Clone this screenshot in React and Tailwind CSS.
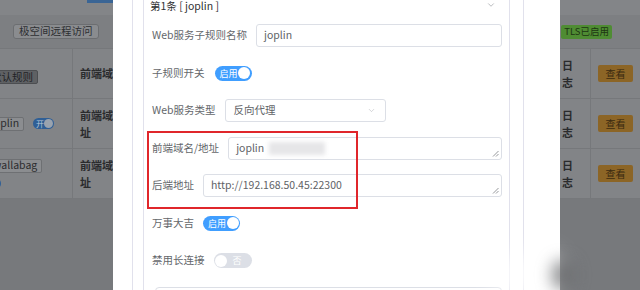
import { ChevronDown } from "lucide-react";

const Switch = ({ on, text }) =>
  on ? (
    <div className="flex h-[15px] w-[37px] items-center justify-between rounded-full bg-[#409eff] pl-[5px] pr-[1.5px]">
      <span className="text-[9px] leading-none text-white">{text}</span>
      <span className="h-[12px] w-[12px] rounded-full bg-white" />
    </div>
  ) : (
    <div className="flex h-[15px] w-[38px] items-center justify-between rounded-full bg-[#dcdfe6] pl-[1.5px] pr-[10px]">
      <span className="h-[12px] w-[12px] rounded-full bg-white" />
      <span className="text-[9px] leading-none text-white">{text}</span>
    </div>
  );

const ResizeHandle = () => (
  <svg className="absolute bottom-[2px] right-[2px]" width="7" height="7" viewBox="0 0 7 7">
    <path d="M1 6.5L6.5 1M4 6.5L6.5 4" stroke="#8a8c90" strokeWidth="0.9" fill="none" />
  </svg>
);

const Row = ({ label, children }) => (
  <div className="flex h-[23px] items-center">
    <span className="mr-[9px] whitespace-nowrap text-[#64676b]">{label}</span>
    {children}
  </div>
);

const TableRow = ({ first, lines }) => (
  <div className="grid h-[50px] grid-cols-[73px_1fr_30px_50px] border-b border-[#76787b] bg-[#828487]">
    <div className="flex items-center overflow-hidden border-r border-[#76787b]">
      <div className="-ml-[14px]">{first}</div>
    </div>
    <div className="flex flex-col justify-center pl-[7px] text-[11px] font-semibold leading-[17px] text-[#2a2b2d]">
      {lines.map((l) => (
        <div key={l} className="whitespace-nowrap">{l}</div>
      ))}
    </div>
    <div className="flex flex-col justify-center pl-[2px] text-[11px] font-semibold leading-[17px] text-[#2a2b2d]">
      <div>日</div>
      <div>志</div>
    </div>
    <div className="flex items-center border-l border-[#76787b] pl-[7px]">
      <span className="flex h-[17px] w-[35px] items-center justify-center rounded-[2px] bg-[#8c6526] text-[10px] text-[#3a2a10]">
        查看
      </span>
    </div>
  </div>
);

const BgTag = ({ children, dark }) => (
  <span
    className={`inline-flex h-[14px] items-center rounded-[2px] border px-[4px] text-[10.5px] leading-none ${
      dark ? "border-[#4c4e51] bg-[#5f6164] text-[#222326]" : "border-[#6e7073] bg-[#8b8d90] text-[#2b2c2e]"
    }`}
  >
    {children}
  </span>
);

export default function App() {
  return (
    <div className="relative h-[290px] w-[640px] overflow-hidden bg-[#77797c] font-['Noto_Sans_CJK_SC',sans-serif]">
      {/* 背景页面 */}
      <div className="h-[15px] bg-[#838588]">
        <div className="ml-[87px] h-[3px] w-[26px] bg-[#3a6595]" />
      </div>
      <div className="flex h-[33px] items-center justify-between bg-[#7d7f82] pl-[13px] pr-[28px]">
        <span className="inline-flex h-[15px] items-center rounded-[3px] border border-[#6c6e71] bg-[#8a8c8f] px-[5px] text-[10.5px] leading-none text-[#2e3033]">
          极空间远程访问
        </span>
        <span className="inline-flex h-[14px] items-center rounded-[2px] bg-[#4f8c33] px-[3px] text-[9.5px] leading-none text-[#1d3512]">
          TLS已启用
        </span>
      </div>
      <div className="border-t border-[#76787b]">
        <TableRow first={<BgTag dark>默认规则</BgTag>} lines={["前端域名地"]} />
        <TableRow
          first={
            <div className="flex items-center gap-[9px]">
              <BgTag>joplin</BgTag>
              <div className="flex h-[11px] w-[21px] items-center justify-between rounded-full bg-[#2f5f96] pl-[3px] pr-[1px]">
                <span className="text-[8px] leading-none text-[#b9c7d8]">开</span>
                <span className="h-[9px] w-[9px] rounded-full bg-[#9aa3ae]" />
              </div>
            </div>
          }
          lines={["前端域名地", "址"]}
        />
        <TableRow
          first={
            <div className="flex flex-col items-start gap-[5px] pl-[2px]">
              <BgTag>wallabag</BgTag>
              <div className="-ml-[8px] flex h-[11px] w-[21px] items-center justify-end rounded-full border-[2px] border-[#2f5f96] bg-[#7f8a98]">
                <span className="h-[7px] w-[7px] rounded-full bg-[#9aa3ae]" />
              </div>
            </div>
          }
          lines={["前端域名地", "址"]}
        />
      </div>

      {/* 遮罩上的对话框 */}
      <div className="absolute left-[113px] top-0 h-[290px] w-[447px] bg-white text-[10.5px] leading-none">
        <div className="-mt-[10px] ml-[19px] h-[310px] w-[392px] border-x border-[#e1e1ec] pl-[10px] pr-[13px]">
          <div className="h-full border-x border-[#e1e1ec]">
            <div className="flex h-[33px] items-center justify-between pl-[6px] pr-[13px] text-[#303133]">
              <span>第1条 [ joplin ]</span>
              <ChevronDown size={10} strokeWidth={1.5} color="#909399" className="-mt-[3px]" />
            </div>
            <div className="flex flex-col gap-[14.5px] pl-[8px] pr-[7px] pt-[1px]">
              <Row label="Web服务子规则名称">
                <div className="flex h-full flex-1 items-center rounded-[3px] border border-[#dcdfe6] px-[7px] text-[#606266]">
                  joplin
                </div>
              </Row>
              <Row label="子规则开关">
                <div className="ml-[1px]">
                  <Switch on text="启用" />
                </div>
              </Row>
              <Row label="Web服务类型">
                <div className="flex h-full w-[161px] items-center justify-between rounded-[3px] border border-[#dcdfe6] pl-[8px] pr-[9px] text-[#606266]">
                  <span>反向代理</span>
                  <ChevronDown size={9} strokeWidth={1.4} color="#b0b3b8" />
                </div>
              </Row>
              <Row label="前端域名/地址">
                <div className="relative flex h-full flex-1 items-center rounded-[3px] border border-[#dcdfe6] px-[7px] text-[#606266]">
                  <span>joplin</span>
                  <span className="ml-[5px] h-[13px] w-[56px] bg-[#e6e6e8] blur-[2px]" />
                  <ResizeHandle />
                </div>
              </Row>
              <Row label="后端地址">
                <div className="relative flex h-full flex-1 items-center rounded-[3px] border border-[#dcdfe6] px-[7px] text-[#606266]">
                  <span>http://192.168.50.45:22300</span>
                  <ResizeHandle />
                </div>
              </Row>
              <Row label="万事大吉">
                <Switch on text="启用" />
              </Row>
              <Row label="禁用长连接">
                <Switch text="否" />
              </Row>
              <div className="flex h-[23px]">
                <div className="ml-[3px] h-full flex-1 rounded-[4px] border border-[#dcdfe6]" />
              </div>
            </div>
          </div>
        </div>
      </div>

      {/* 标注框 */}
      <div className="absolute left-[147px] top-[131px] h-[78px] w-[211px] border-2 border-[#e0262b]" />

      {/* 水印 */}
      <div className="absolute left-[492px] top-[254px] h-[40px] w-[68px] rounded-full bg-white/80 blur-md" />
      <div className="absolute left-[552px] top-[260px] h-[30px] w-[22px] rounded-full bg-[#5c5e61]/70 blur-sm" />
    </div>
  );
}
